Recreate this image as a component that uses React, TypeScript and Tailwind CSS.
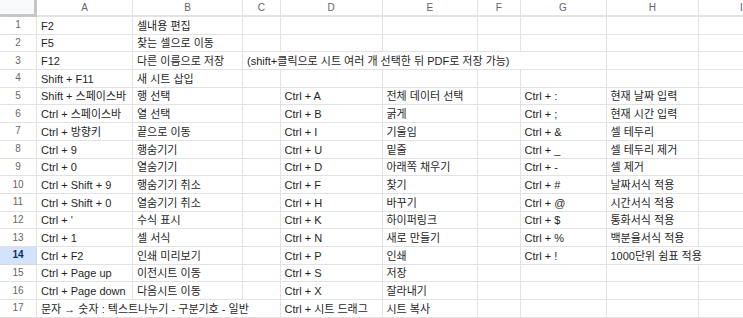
import React from "react";

type Cell = { t: string; span: number };

const colLetters = ["A", "B", "C", "D", "E", "F", "G", "H", "I"];

const spanClass: Record<number, string> = {
  1: "",
  2: "col-span-2",
  3: "col-span-3",
  5: "col-span-5",
};

function buildRow(values: string[], spans: Record<number, number> = {}): Cell[] {
  const cells: Cell[] = [];
  for (let i = 0; i < 9; ) {
    const s = spans[i] ?? 1;
    cells.push({ t: values[i] ?? "", span: s });
    i += s;
  }
  return cells;
}

const rows: Cell[][] = [
  buildRow(["F2", "셀내용 편집"]),
  buildRow(["F5", "찾는 셀으로 이동"]),
  buildRow(["F12", "다른 이름으로 저장", "(shift+클릭으로 시트 여러 개 선택한 뒤 PDF로 저장 가능)"], { 2: 5 }),
  buildRow(["Shift + F11", "새 시트 삽입"]),
  buildRow(["Shift + 스페이스바", "행 선택", "", "Ctrl + A", "전체 데이터 선택", "", "Ctrl + :", "현재 날짜 입력"]),
  buildRow(["Ctrl + 스페이스바", "열 선택", "", "Ctrl + B", "굵게", "", "Ctrl + ;", "현재 시간 입력"]),
  buildRow(["Ctrl + 방향키", "끝으로 이동", "", "Ctrl + I", "기울임", "", "Ctrl + &", "셀 테두리"]),
  buildRow(["Ctrl + 9", "행숨기기", "", "Ctrl + U", "밑줄", "", "Ctrl + _", "셀 테두리 제거"]),
  buildRow(["Ctrl + 0", "열숨기기", "", "Ctrl + D", "아래쪽 채우기", "", "Ctrl + -", "셀 제거"]),
  buildRow(["Ctrl + Shift + 9", "행숨기기 취소", "", "Ctrl + F", "찾기", "", "Ctrl + #", "날짜서식 적용"]),
  buildRow(["Ctrl + Shift + 0", "열숨기기 취소", "", "Ctrl + H", "바꾸기", "", "Ctrl + @", "시간서식 적용"]),
  buildRow(["Ctrl + '", "수식 표시", "", "Ctrl + K", "하이퍼링크", "", "Ctrl + $", "통화서식 적용"]),
  buildRow(["Ctrl + 1", "셀 서식", "", "Ctrl + N", "새로 만들기", "", "Ctrl + %", "백분율서식 적용"]),
  buildRow(["Ctrl + F2", "인쇄 미리보기", "", "Ctrl + P", "인쇄", "", "Ctrl + !", "1000단위 쉼표 적용"], { 7: 2 }),
  buildRow(["Ctrl + Page up", "이전시트 이동", "", "Ctrl + S", "저장"]),
  buildRow(["Ctrl + Page down", "다음시트 이동", "", "Ctrl + X", "잘라내기"]),
  buildRow(["문자 → 숫자 : 텍스트나누기 - 구분기호 - 일반", "", "", "Ctrl + 시트 드래그", "시트 복사"], { 0: 3 }),
];

export default function App() {
  return (
    <div className="w-[743px] h-[318px] overflow-hidden bg-white font-['Liberation_Sans','Noto_Sans_CJK_KR',sans-serif]">
      <div className="grid w-[785px] grid-cols-[37px_96px_110px_37.5px_102px_95.5px_42.5px_86px_92.5px_86px] grid-rows-[17px_repeat(17,17.7px)]">
        {/* HEADER ROW */}
        <div className="bg-[#f8f9fa] border-r-[3px] border-b-[3px] border-[#c4c7c5]" />
        {colLetters.map((c) => (
          <div
            key={c}
            className="flex items-center justify-center bg-white border-r border-[#e1e1e1] border-b-2 border-b-[#e3e3e3] text-[10px] text-[#5f6368] leading-none"
          >
            {c}
          </div>
        ))}

        {/* BODY ROWS */}
        {rows.map((cells, idx) => {
          const n = idx + 1;
          const selected = n === 14;
          return (
            <React.Fragment key={n}>
              <div
                className={
                  selected
                    ? "flex items-center justify-center bg-[#d3e3fd] border-r border-b border-[#d7d7d7] text-[10px] font-bold text-[#0b2e6b] leading-none"
                    : "flex items-center justify-center bg-white border-r border-b border-[#e1e1e1] text-[10px] text-[#666666] leading-none"
                }
              >
                {n}
              </div>
              {cells.map((cell, ci) => (
                <div
                  key={ci}
                  className={`${spanClass[cell.span]} flex items-end overflow-hidden whitespace-nowrap border-r border-b border-[#e2e2e2] px-[4px] pb-[1px] text-[11px] leading-[14px] text-[#1f1f1f]`}
                >
                  {cell.t}
                </div>
              ))}
            </React.Fragment>
          );
        })}
      </div>
    </div>
  );
}
